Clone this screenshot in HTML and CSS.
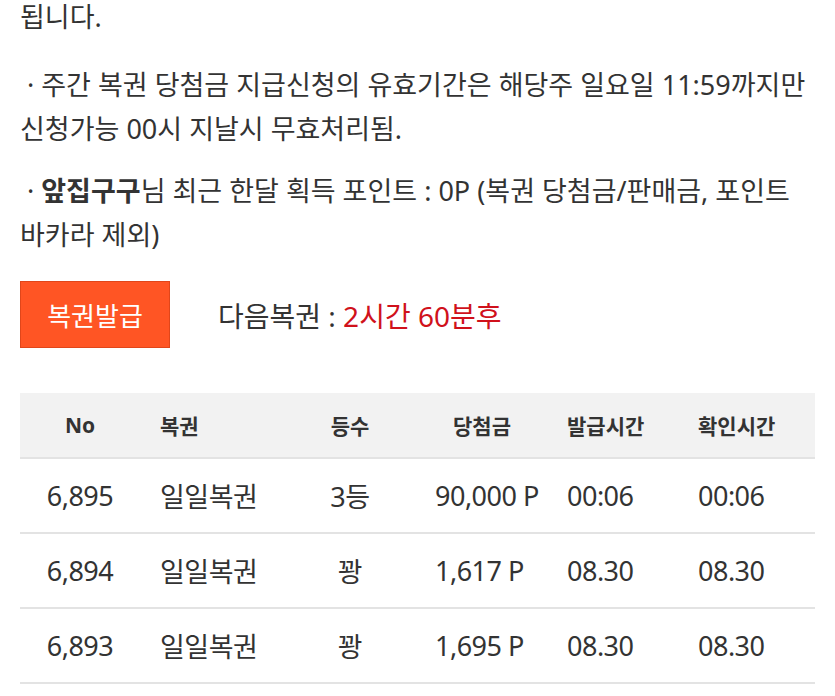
FILE: index.html
```html
<!DOCTYPE html>
<html lang="ko">
<head>
<meta charset="utf-8">
<link rel="stylesheet" href="styles.css">
</head>
<body>
<div class="page">
  <p class="para first">됩니다.</p>
  <p class="para p2">&nbsp;·&nbsp;주간 복권 당첨금 지급신청의 유효기간은 해당주 일요일 11:59까지만<br>신청가능 00시 지날시 무효처리됨.</p>
  <p class="para p3">&nbsp;·&nbsp;<b>앞집구구</b>님 최근 한달 획득 포인트 : 0P (복권 당첨금/판매금, 포인트<br>바카라 제외)</p>
  <div class="actions">
    <button class="issue">복권발급</button>
    <div class="next">다음복권 : <span class="remain">2시간 60분후</span></div>
  </div>
  <div class="table">
    <div class="row head">
      <div class="c c1">No</div>
      <div class="c c2">복권</div>
      <div class="c c3">등수</div>
      <div class="c c4 h4">당첨금</div>
      <div class="c c5">발급시간</div>
      <div class="c c6">확인시간</div>
    </div>
    <div class="row">
      <div class="c c1">6,895</div>
      <div class="c c2">일일복권</div>
      <div class="c c3">3등</div>
      <div class="c c4">90,000 P</div>
      <div class="c c5">00:06</div>
      <div class="c c6">00:06</div>
    </div>
    <div class="row">
      <div class="c c1">6,894</div>
      <div class="c c2">일일복권</div>
      <div class="c c3">꽝</div>
      <div class="c c4">1,617 P</div>
      <div class="c c5">08.30</div>
      <div class="c c6">08.30</div>
    </div>
    <div class="row">
      <div class="c c1">6,893</div>
      <div class="c c2">일일복권</div>
      <div class="c c3">꽝</div>
      <div class="c c4">1,695 P</div>
      <div class="c c5">08.30</div>
      <div class="c c6">08.30</div>
    </div>
  </div>
</div>
</body>
</html>
```
FILE: styles.css
```css
html, body {
  margin: 0;
  padding: 0;
  background: #ffffff;
}
body {
  font-family: "Noto Sans", "Noto Sans CJK KR", sans-serif;
  color: #333333;
  overflow: hidden;
}
.page {
  padding: 0 20px;
}
.para {
  margin: 0;
  font-size: 27px;
  line-height: 44px;
  white-space: nowrap;
}
.para.first {
  line-height: 34px;
  margin-bottom: 29px;
}
.para.p3 {
  margin-top: 18px;
}
.para b {
  font-weight: 700;
}
.actions {
  margin-top: 24px;
  display: flex;
  align-items: center;
}
.issue {
  width: 150px;
  height: 67px;
  background: #ff5524;
  border: 1px solid #e0461a;
  color: #ffffff;
  font-family: inherit;
  font-size: 26px;
  padding: 0;
}
.next {
  margin-left: 48px;
  font-size: 28px;
  color: #333333;
}
.remain {
  color: #d0111b;
}
.table {
  margin-top: 45px;
}
.row {
  display: grid;
  grid-template-columns: 120px 160px 100px 155px 130px 130px;
  height: 73px;
  align-items: center;
  border-bottom: 2px solid #e3e3e3;
  font-size: 27px;
  letter-spacing: -0.5px;
}
.row.head {
  height: 64px;
  background: #f2f2f2;
  font-size: 21px;
  font-weight: 700;
  letter-spacing: 0;
}
.c1 { text-align: center; }
.c2 { padding-left: 20px; }
.c3 { text-align: center; }
.c4 { padding-left: 35px; }
.c4.h4 { padding-left: 53px; }
.c5 { padding-left: 12px; }
.c6 { padding-left: 13px; }
```
